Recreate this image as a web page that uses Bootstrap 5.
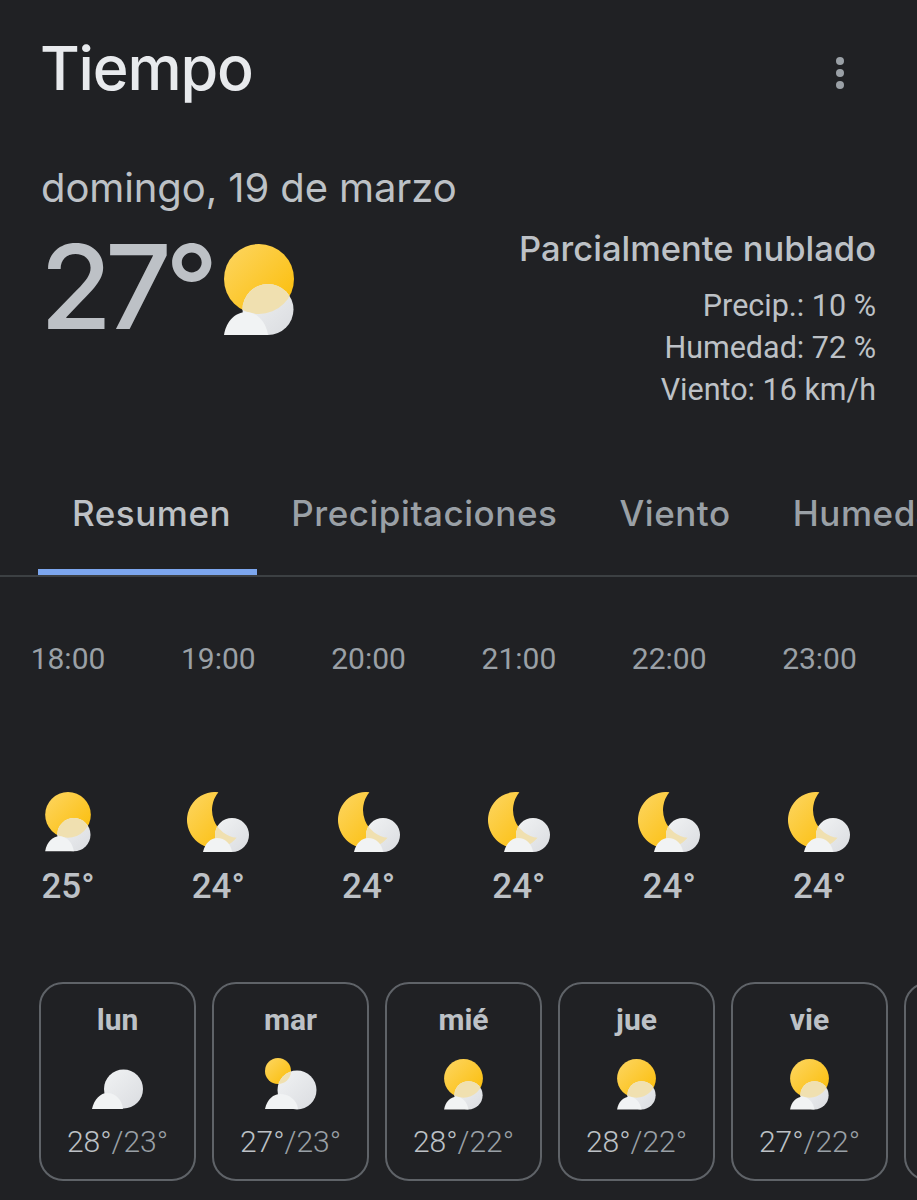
<!DOCTYPE html>
<html lang="es">
<head>
    <meta charset="UTF-8">
    <title>Tiempo</title>
    <link href="https://cdn.jsdelivr.net/npm/bootstrap@5.3.0/dist/css/bootstrap.min.css" rel="stylesheet">
    <style>
        html, body { background: #202124; overflow: hidden; }
        body { height: 1200px; font-family: Roboto, "Liberation Sans", sans-serif; color: #bdc1c6; }
        .display-face { font-family: Inter, "Noto Sans", sans-serif; }

        .top-bar { padding: 30px 41px 0 40px; height: 136px; }
        .page-title { font-size: 61px; line-height: 76px; font-weight: 500; color: #e8eaed; letter-spacing: -1.2px; margin: 0; }
        .dots { gap: 4px; margin: 27px 32px 0 0; }
        .dots i { width: 8px; height: 8px; border-radius: 50%; background: #9aa0a6; display: block; }

        .summary { padding: 0 41px; height: 321px; }
        .date-line { font-size: 40px; line-height: 50px; margin-top: 27px; letter-spacing: -.1px; }
        .now-temp { font-size: 117px; line-height: 120px; font-weight: 500; letter-spacing: -7px; margin: 14px 0 0 -1px; }
        .now-icon { width: 70px; height: 92px; margin: 31px 0 0 13px; }
        .condition { font-size: 34.5px; line-height: 42px; margin-top: 92px; margin-bottom: 15px; font-weight: 500; }
        .stat { font-size: 30.5px; line-height: 42px; }

        .tab-strip { height: 120px; border-bottom: 2px solid #3c4043; padding-left: 38px; flex-wrap: nowrap; overflow: hidden; }
        .tab-strip .nav-link { font-size: 35px; line-height: 50px; height: 118px; padding: 31px 28px 0 34px; color: #9aa0a6; white-space: nowrap; font-weight: 500; letter-spacing: .55px; }
        .tab-strip .nav-link.active { color: #bdc1c6; border-bottom: 6px solid #7ca6ee; padding-right: 26px; }

        .hour-row { gap: 14.3px; margin-top: 61px; }
        .hour-col { width: 136px; flex: none; }
        .hour-label { font-size: 30px; line-height: 42px; color: #9aa0a6; margin-bottom: 112px; }
        .hour-icon { width: 62px; height: 60px; display: block; }
        .hour-temp { font-size: 35px; line-height: 46px; font-weight: 500; margin-top: 12px; }

        .day-row { gap: 16px; padding-left: 39px; margin-top: 72px; flex-wrap: nowrap; }
        .day-box { width: 157px; height: 199px; flex: none; border: 2px solid #5f6368; border-radius: 24px; background: transparent; color: #bdc1c6; }
        .day-name { font-size: 30px; line-height: 40px; font-weight: 700; margin-top: 16px; height: 40px; }
        .day-icon { height: 60px; margin-top: 10px; }
        .day-temps { font-size: 30px; line-height: 40px; font-weight: 300; margin-top: 12px; white-space: nowrap; }
        .day-temps span { color: #9aa0a6; }
    </style>
</head>
<body>

<svg width="0" height="0" class="position-absolute">
    <defs>
        <linearGradient id="sunFill" x1="0" y1="0" x2="1" y2="1">
            <stop offset="0" stop-color="#fdd663"/>
            <stop offset="1" stop-color="#fbbc04"/>
        </linearGradient>
        <linearGradient id="cloudBack" x1="0" y1="0" x2="1" y2="1">
            <stop offset="0" stop-color="#f1f3f4"/>
            <stop offset="1" stop-color="#dadce0"/>
        </linearGradient>
        <clipPath id="clipBigCloud"><circle cx="44" cy="65.5" r="25.5"/></clipPath>
        <clipPath id="clipMoonCloud"><circle cx="45" cy="45" r="17"/></clipPath>
        <clipPath id="clipDayCloud"><circle cx="32" cy="32" r="19.5"/></clipPath>
    </defs>
    <!-- sun behind a cloud -->
    <symbol id="partly" viewBox="0 0 70 92">
        <circle cx="35" cy="35" r="35" fill="url(#sunFill)"/>
        <circle cx="44" cy="65.5" r="25.5" fill="url(#cloudBack)"/>
        <circle cx="35" cy="35" r="35" fill="#f0e0b0" clip-path="url(#clipBigCloud)"/>
        <path d="M0 91C2 77 12 68 22 68C33 68 42 78 44 91Z" fill="#f1f3f4"/>
    </symbol>
    <!-- crescent moon behind a cloud -->
    <symbol id="night" viewBox="0 2 62 60">
        <path d="M31.4 2.2A28 28 0 1 0 49.6 47.8A28 28 0 0 1 31.4 2.2Z" fill="url(#sunFill)"/>
        <circle cx="45" cy="45" r="17" fill="url(#cloudBack)"/>
        <path d="M31.4 2.2A28 28 0 1 0 49.6 47.8A28 28 0 0 1 31.4 2.2Z" fill="#f0e0b0" clip-path="url(#clipMoonCloud)"/>
        <path d="M16 62C18 53 24 48 30 48C38 48 44 54 45 62Z" fill="#f1f3f4"/>
    </symbol>
    <symbol id="cloudy" viewBox="0 0 52 41">
        <circle cx="31.5" cy="20" r="19.5" fill="url(#cloudBack)"/>
        <path d="M0 40C2 30 9 24 15 24C24 24 30 31 31 40Z" fill="#f1f3f4"/>
    </symbol>
    <symbol id="mostly" viewBox="0 0 52 52">
        <circle cx="13" cy="13" r="13" fill="url(#sunFill)"/>
        <circle cx="32" cy="32" r="19.5" fill="url(#cloudBack)"/>
        <circle cx="13" cy="13" r="13" fill="#f0e0b0" clip-path="url(#clipDayCloud)"/>
        <path d="M0 51C2 41 9 36 15 36C24 36 32 42 33 51Z" fill="#f1f3f4"/>
    </symbol>
</svg>

<div class="top-bar d-flex justify-content-between align-items-start">
    <h1 class="page-title display-face">Tiempo</h1>
    <div class="dots d-flex flex-column"><i></i><i></i><i></i></div>
</div>

<div class="summary d-flex justify-content-between align-items-start">
    <div>
        <div class="date-line display-face">domingo, 19 de marzo</div>
        <div class="d-flex align-items-start">
            <div class="now-temp display-face">27°</div>
            <svg class="now-icon"><use href="#partly"/></svg>
        </div>
    </div>
    <div class="text-end">
        <div class="condition display-face">Parcialmente nublado</div>
        <div class="stat">Precip.: 10 %</div>
        <div class="stat">Humedad: 72 %</div>
        <div class="stat">Viento: 16 km/h</div>
    </div>
</div>

<ul class="nav tab-strip">
    <li class="nav-item"><a class="nav-link active display-face" href="#">Resumen</a></li>
    <li class="nav-item"><a class="nav-link display-face" href="#">Precipitaciones</a></li>
    <li class="nav-item"><a class="nav-link display-face" href="#">Viento</a></li>
    <li class="nav-item"><a class="nav-link display-face" href="#">Humedad</a></li>
</ul>

<div class="hour-row d-flex" id="hours"></div>
<div class="day-row d-flex" id="days"></div>

<script>
    const hours = [
        ['18:00', 'partly', '25°'], ['19:00', 'night', '24°'], ['20:00', 'night', '24°'],
        ['21:00', 'night', '24°'], ['22:00', 'night', '24°'], ['23:00', 'night', '24°']
    ];
    const days = [
        ['lun', 'cloudy', 52, 41, '28°', '23°'], ['mar', 'mostly', 52, 52, '27°', '23°'],
        ['mié', 'partly', 39, 51, '28°', '22°'], ['jue', 'partly', 39, 51, '28°', '22°'],
        ['vie', 'partly', 39, 51, '27°', '22°']
    ];

    document.getElementById('hours').innerHTML = hours.map(h => `
        <div class="hour-col d-flex flex-column align-items-center">
            <div class="hour-label">${h[0]}</div>
            <svg class="hour-icon"><use href="#${h[1]}"/></svg>
            <div class="hour-temp">${h[2]}</div>
        </div>`).join('');

    // the sixth box only peeks in at the right edge, so it stays empty
    document.getElementById('days').innerHTML = days.map(d => `
        <div class="day-box d-flex flex-column align-items-center">
            <div class="day-name">${d[0]}</div>
            <div class="day-icon d-flex align-items-end"><svg width="${d[2]}" height="${d[3]}"><use href="#${d[1]}"/></svg></div>
            <div class="day-temps">${d[4]}<span>/${d[5]}</span></div>
        </div>`).join('') + '<div class="day-box"></div>';
</script>
<script src="https://cdn.jsdelivr.net/npm/bootstrap@5.3.0/dist/js/bootstrap.bundle.min.js"></script>
</body>
</html>
